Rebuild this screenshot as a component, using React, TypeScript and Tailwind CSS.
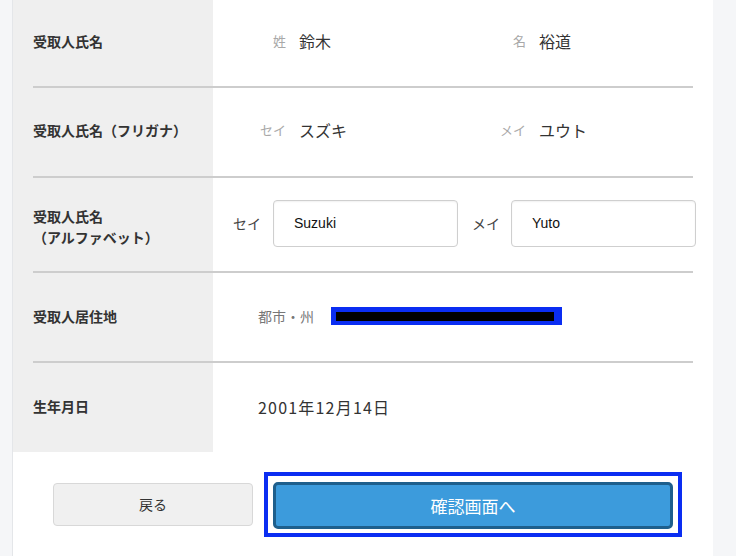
import React from "react";

const jp = "font-['Noto_Sans_CJK_JP','Noto_Sans',sans-serif]";

const NamePair = ({ label, value }: { label: string; value: string }) => (
  <div className="flex items-center w-[240px]">
    <span className="w-[73px] text-right text-[13px] text-[#a8a8a8]">{label}</span>
    <span className="ml-[13px] text-[16px] text-[#333]">{value}</span>
  </div>
);

const Row = ({
  label,
  height,
  last,
  children,
}: {
  label: React.ReactNode;
  height: string;
  last?: boolean;
  children: React.ReactNode;
}) => (
  <div className={`flex items-center ${height} ${last ? "" : "border-b-2 border-[#cdcdcd]"}`}>
    <div className="w-[180px] shrink-0 text-[14px] font-bold leading-[21px] text-[#333]">{label}</div>
    <div className="flex-1 flex items-center">{children}</div>
  </div>
);

const TextBox = ({ value }: { value: string }) => (
  <div className="shrink-0 w-[185px] h-[47px] flex items-center px-[20px] border border-[#cfcfcf] rounded-[4px] shadow-[inset_0_1px_2px_rgba(0,0,0,0.06)] font-['Liberation_Sans',sans-serif] text-[14px] text-[#111]">
    {value}
  </div>
);

export default function App() {
  return (
    <div className={`w-[736px] h-[556px] bg-[#f5f6f8] pl-[12px] pr-[23px] overflow-hidden ${jp}`}>
      <div className="h-full bg-white border-l border-[#e4e6e9]">
        {/* table with grey label column */}
        <div className="bg-[linear-gradient(to_right,#efefef_200px,#ffffff_200px)] px-[20px]">
          <Row label="受取人氏名" height="h-[88px] pb-[4px]">
            <NamePair label="姓" value="鈴木" />
            <NamePair label="名" value="裕道" />
          </Row>
          <Row label="受取人氏名（フリガナ）" height="h-[90px] pb-[4px]">
            <NamePair label="セイ" value="スズキ" />
            <NamePair label="メイ" value="ユウト" />
          </Row>
          <Row
            label={
              <div className="pt-[4px]">
                受取人氏名
                <br />
                （アルファベット）
              </div>
            }
            height="h-[95px]"
          >
            <div className="flex items-center pl-[20px] -mt-[2px]">
              <span className="shrink-0 w-[26px] whitespace-nowrap text-[14px] text-[#444]">セイ</span>
              <div className="ml-[14px]">
                <TextBox value="Suzuki" />
              </div>
              <span className="shrink-0 w-[25px] whitespace-nowrap ml-[14px] text-[14px] text-[#444]">メイ</span>
              <div className="ml-[14px]">
                <TextBox value="Yuto" />
              </div>
            </div>
          </Row>
          <Row label="受取人居住地" height="h-[90px] pb-[2px]">
            <div className="flex items-center pl-[45px]">
              <span className="text-[14px] text-[#777]">都市・州</span>
              <div className="ml-[17px] w-[231px] h-[18px] bg-[#0a2df2] pl-[5px] pr-[8px] pt-[5px] pb-[4px]">
                <div className="h-full bg-black" />
              </div>
            </div>
          </Row>
          <Row label="生年月日" height="h-[89px] pb-[2px]" last>
            <span className="pl-[45px] text-[16px] tracking-[1.2px] text-[#333]">2001年12月14日</span>
          </Row>
        </div>

        {/* buttons */}
        <div className="flex items-center gap-[11px] pl-[40px] pt-[20px]">
          <button className="w-[200px] h-[43px] bg-[#f0f0f0] border border-[#d8d8d8] rounded-[4px] text-[14px] text-[#333]">
            戻る
          </button>
          <div className="border-4 border-[#0a2df2] pt-[6px] pb-[4px] px-[5px]">
            <button className="block w-[400px] h-[47px] bg-[#3c9bdc] border-[3px] border-[#1e5f8c] rounded-[5px] text-[17px] text-white">
              確認画面へ
            </button>
          </div>
        </div>
      </div>
    </div>
  );
}
